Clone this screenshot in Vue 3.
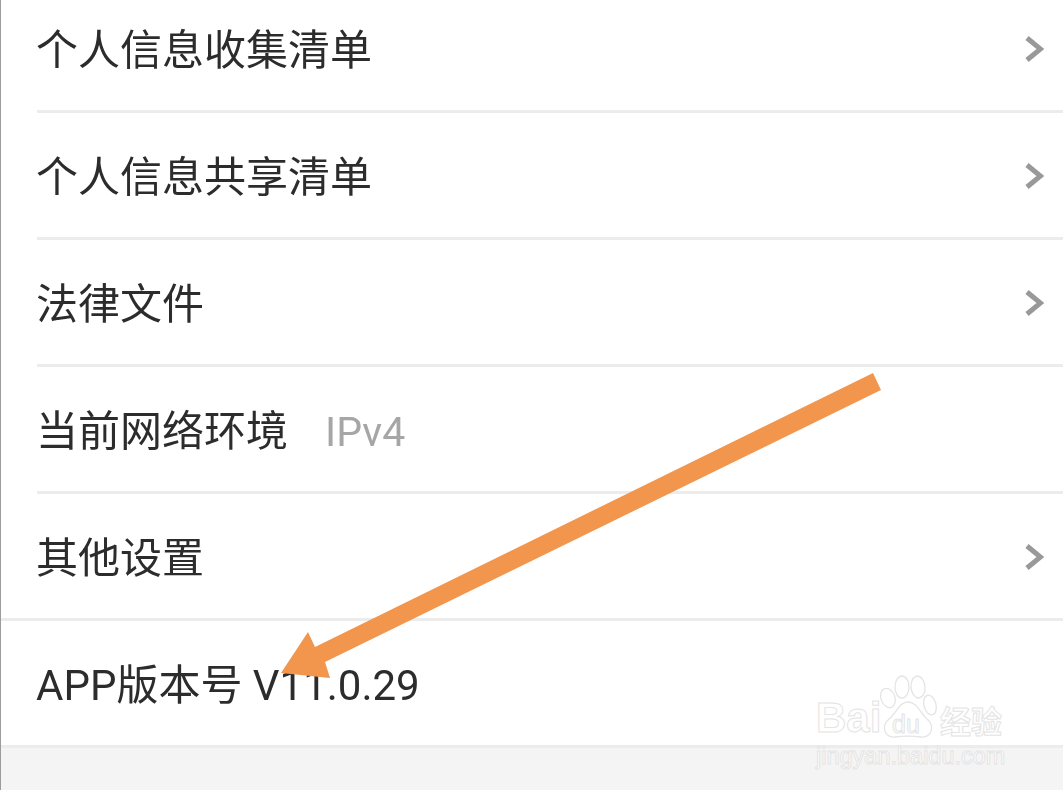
<template>
  <div class="page">
    <div class="list">
      <div
        v-for="row in rows"
        :key="row.title"
        class="row"
        :class="{ wide: row.wide }"
      >
        <span class="title">{{ row.title }}</span>
        <span v-if="row.extra" class="extra">{{ row.extra }}</span>
        <svg v-if="row.arrow" class="chevron" width="20" height="28" viewBox="0 0 20 28">
          <path d="M3 3 L16.5 14 L3 25" fill="none" stroke="#999" stroke-width="5" />
        </svg>
      </div>
    </div>
    <div class="footer"></div>

    <!-- 橙色箭头 -->
    <svg class="pointer" width="1063" height="790" viewBox="0 0 1063 790">
      <polygon
        points="873,373 881,390 325,662 330,678 281,673 308,632 315,647"
        fill="#f2964e"
      />
    </svg>

    <!-- 水印 -->
    <div class="mark">
      <div class="mark-top">
        <span class="mark-bai">Bai</span>
        <svg class="paw" width="60" height="72" viewBox="0 0 60 72">
          <g fill="none" stroke="#e4e4e4" stroke-width="1.3">
            <ellipse cx="9" cy="25" rx="7" ry="10" transform="rotate(-20 9 25)" />
            <ellipse cx="23" cy="14" rx="7" ry="11" />
            <ellipse cx="39" cy="14" rx="7" ry="11" transform="rotate(-5 39 14)" />
            <ellipse cx="51" cy="32" rx="6" ry="10" transform="rotate(-15 51 32)" />
            <path d="M29 29 C20 29 18 40 9 47 C2 54 6 65 16 64 C24 63 34 63 42 64 C52 65 56 54 49 47 C41 40 38 29 29 29 Z" />
          </g>
        </svg>
        <span class="mark-du">du</span>
        <span class="mark-jy">经验</span>
      </div>
      <div class="mark-url">jingyan.baidu.com</div>
    </div>
  </div>
</template>

<script setup>
const rows = [
  { title: '个人信息收集清单', arrow: true },
  { title: '个人信息共享清单', arrow: true },
  { title: '法律文件', arrow: true },
  { title: '当前网络环境', extra: 'IPv4' },
  { title: '其他设置', arrow: true, wide: true },
  { title: 'APP版本号 V11.0.29', wide: true }
]
</script>

<style>
html,
body {
  margin: 0;
  background: #fff;
  overflow: hidden;
}
</style>

<style scoped>
.page {
  position: relative;
  width: 1063px;
  height: 790px;
  overflow: hidden;
  background: #fff;
  box-sizing: border-box;
  border-left: 1px solid #9c9c9c;
  font-family: Roboto, "Noto Sans CJK SC", sans-serif;
  color: #2c2c2c;
}
.list {
  margin-top: -14px;
}
.row {
  display: flex;
  align-items: center;
  height: 127px;
  margin-left: 36px;
  box-sizing: border-box;
  border-bottom: 3px solid #ececec;
  position: relative;
}
.row.wide {
  margin-left: 0;
  padding-left: 36px;
}
.title {
  font-size: 42px;
  line-height: 60px;
  margin-top: 5px;
  margin-left: -1px;
  filter: blur(0.4px);
}
.extra {
  margin-left: 37px;
  margin-top: 5px;
  font-size: 41px;
  line-height: 60px;
  color: #a6a6a6;
  filter: blur(0.4px);
}
.chevron {
  margin-left: auto;
  margin-right: 19px;
  margin-top: 2px;
  filter: blur(0.6px);
}
.footer {
  height: 50px;
  background: #f4f4f4;
}
.pointer {
  position: absolute;
  left: -1px;
  top: 0;
}
.mark {
  position: absolute;
  left: 815px;
  top: 676px;
  width: 195px;
}
.mark-top {
  position: relative;
  height: 66px;
}
.mark-bai,
.mark-du,
.mark-jy,
.mark-url {
  position: absolute;
  color: #fff;
  -webkit-text-stroke: 1px #e4e4e4;
  font-family: "Liberation Sans", "Noto Sans CJK SC", sans-serif;
}
.mark-bai {
  left: 0;
  top: 18px;
  font-size: 42px;
  line-height: 48px;
  font-weight: 700;
}
.paw {
  position: absolute;
  left: 63px;
  top: -3px;
}
.mark-du {
  left: 76px;
  top: 34px;
  font-size: 25px;
  line-height: 28px;
}
.mark-jy {
  left: 124px;
  top: 24px;
  font-size: 31px;
  line-height: 40px;
  font-family: "Noto Sans CJK SC", sans-serif;
  font-weight: 700;
}
.mark-url {
  left: 0;
  top: 66px;
  font-size: 23.5px;
  line-height: 28px;
  white-space: nowrap;
}
</style>
